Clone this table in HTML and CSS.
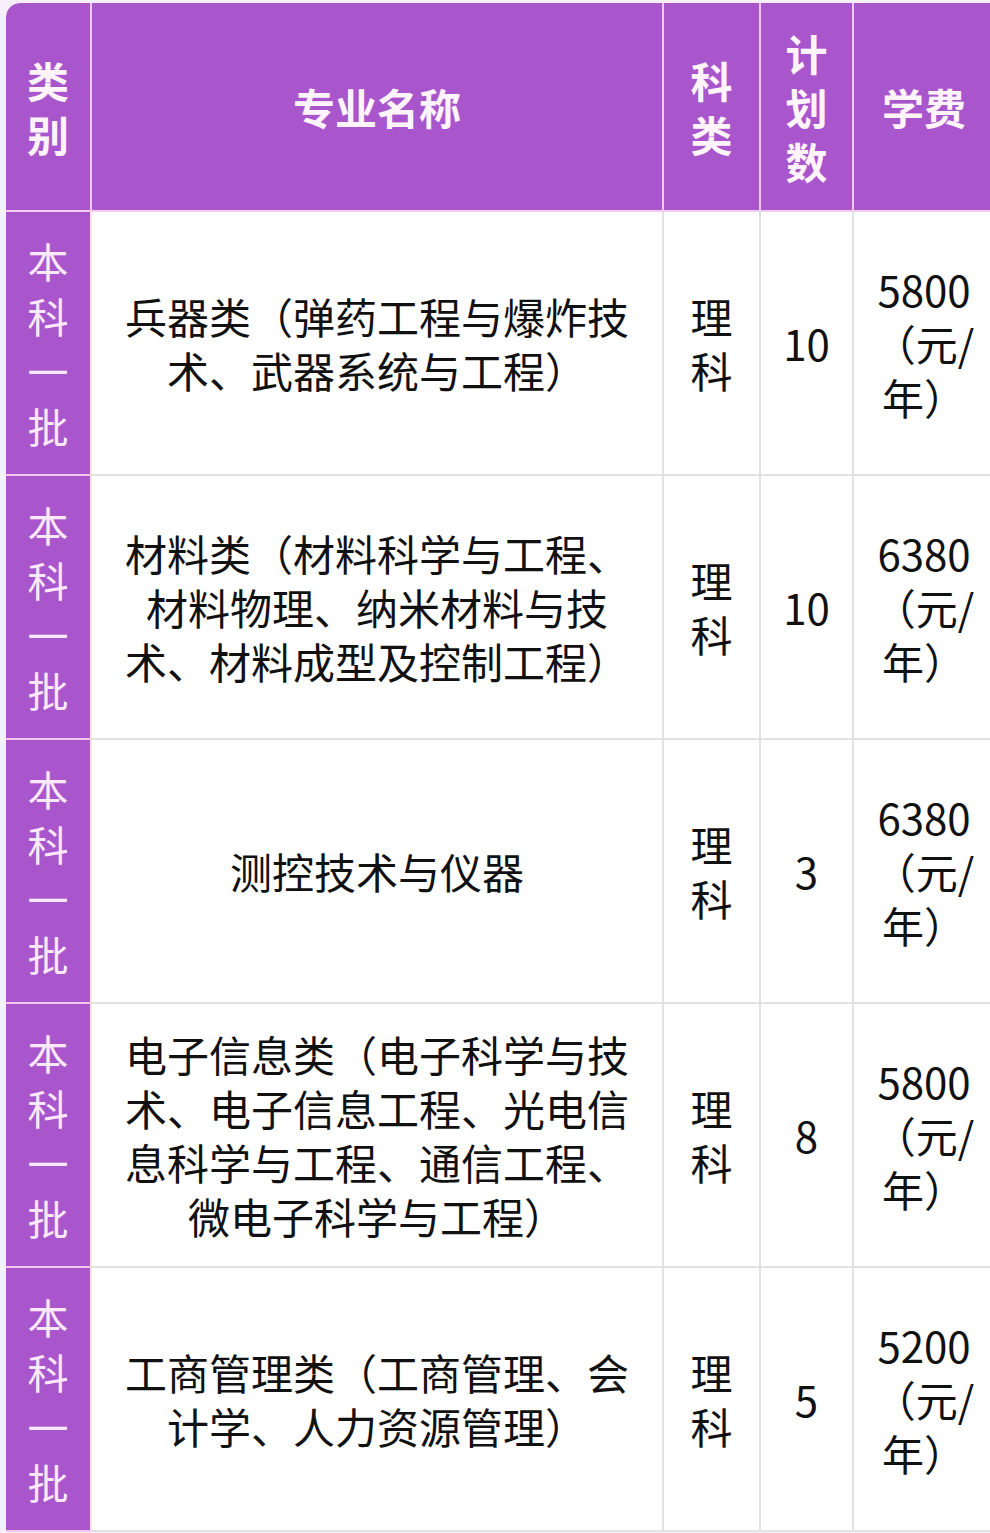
FILE: index.html
```html
<!DOCTYPE html>
<html lang="zh-CN">
<head>
<meta charset="utf-8">
<title>招生计划</title>
<link rel="stylesheet" href="styles.css">
</head>
<body>
<div class="wrap">
<table class="plan">
  <colgroup>
    <col class="c-type">
    <col class="c-name">
    <col class="c-sub">
    <col class="c-num">
    <col class="c-fee">
  </colgroup>
  <thead>
    <tr>
      <th class="h-type">类<br>别</th>
      <th>专业名称</th>
      <th>科<br>类</th>
      <th>计<br>划<br>数</th>
      <th>学费</th>
    </tr>
  </thead>
  <tbody>
    <tr>
      <td class="type">本<br>科<br>一<br>批</td>
      <td class="name">兵器类（弹药工程与爆炸技术、武器系统与工程）</td>
      <td class="sub">理<br>科</td>
      <td class="num">10</td>
      <td class="fee">5800（元/年）</td>
    </tr>
    <tr>
      <td class="type">本<br>科<br>一<br>批</td>
      <td class="name">材料类（材料科学与工程、材料物理、纳米材料与技术、材料成型及控制工程）</td>
      <td class="sub">理<br>科</td>
      <td class="num">10</td>
      <td class="fee">6380（元/年）</td>
    </tr>
    <tr>
      <td class="type">本<br>科<br>一<br>批</td>
      <td class="name">测控技术与仪器</td>
      <td class="sub">理<br>科</td>
      <td class="num">3</td>
      <td class="fee">6380（元/年）</td>
    </tr>
    <tr>
      <td class="type">本<br>科<br>一<br>批</td>
      <td class="name">电子信息类（电子科学与技术、电子信息工程、光电信息科学与工程、通信工程、微电子科学与工程）</td>
      <td class="sub">理<br>科</td>
      <td class="num">8</td>
      <td class="fee">5800（元/年）</td>
    </tr>
    <tr>
      <td class="type">本<br>科<br>一<br>批</td>
      <td class="name">工商管理类（工商管理、会计学、人力资源管理）</td>
      <td class="sub">理<br>科</td>
      <td class="num">5</td>
      <td class="fee">5200（元/年）</td>
    </tr>
  </tbody>
</table>
</div>
</body>
</html>
```
FILE: styles.css
```css
html, body {
  margin: 0;
  padding: 0;
  background: #f7effb;
}
body {
  width: 990px;
  height: 1533px;
  overflow: hidden;
  font-family: "Noto Sans CJK SC", "Noto Sans", sans-serif;
}
.wrap {
  padding: 3px 0 0 6px;
}
.plan {
  table-layout: fixed;
  border-collapse: separate;
  border-spacing: 0;
  width: 990px;
  background: #ffffff;
  border-top-left-radius: 14px;
  overflow: hidden;
}
.c-type { width: 86px; }
.c-name { width: 572px; }
.c-sub { width: 97px; }
.c-num { width: 93px; }
.c-fee { width: 142px; }

.plan th, .plan td {
  box-sizing: border-box;
  padding: 0;
  text-align: center;
  vertical-align: middle;
  font-size: 42px;
  line-height: 54px;
}
.plan th {
  height: 209px;
  background: #a956cd;
  color: #fff3fc;
  font-weight: 700;
  border-right: 2px solid #f1c9ef;
  border-bottom: 2px solid #f3cdf2;
}
.plan th.h-type {
  border-top-left-radius: 14px;
}
.plan td {
  height: 264px;
  color: #111111;
  font-weight: 400;
  border-right: 2px solid #e2e2e2;
  border-bottom: 2px solid #e2e2e2;
}
.plan td.type {
  background: #a956cd;
  color: #fde9fb;
  line-height: 55px;
  font-size: 41px;
  border-right: 2px solid #f6e2f6;
  border-bottom: 2px solid #f3c6f1;
}
.plan td.name {
  padding: 0 25px;
}
.plan td.fee {
  padding: 0 10px;
}
```
